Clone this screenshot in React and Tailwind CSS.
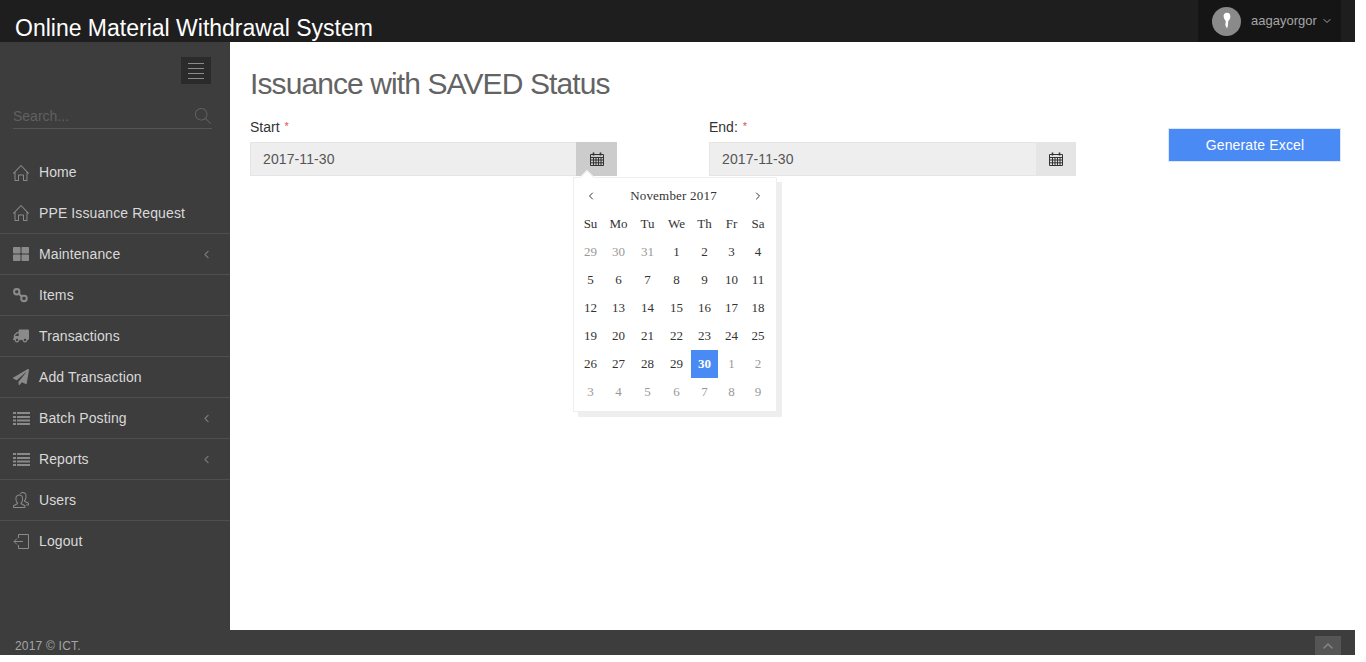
import { ChevronDown, ChevronLeft, ChevronRight, ChevronUp } from "lucide-react"
import { FaThLarge, FaTruck, FaPaperPlane } from "react-icons/fa"
import { SlHome, SlMagnifier, SlPeople } from "react-icons/sl"

function LinkIcon() {
  return (
    <svg viewBox="0 0 16 16" className="w-[15px] h-[15px]" fill="none" stroke="currentColor" strokeWidth="2.2">
      <rect x="1.2" y="1.2" width="5.6" height="5.6" rx="2.6" />
      <rect x="8.800" y="8.200" width="5.8" height="5.8" rx="2.6" />
      <path d="M6 6l3.500 3" />
    </svg>
  )
}

function ListIcon() {
  return (
    <svg viewBox="0 0 17 14" className="w-[17px] h-[14px]" fill="currentColor">
      <path d="M0 1h3v2H0zM4 1h13v2H4zM0 5h3v2H0zM4 5h13v2H4zM0 8.500h3v2H0zM4 8.500h13v2H4zM0 12h3v2H0zM4 12h13v2H4z" />
    </svg>
  )
}

function LogoutIcon() {
  return (
    <svg viewBox="0 0 17 17" className="w-[17px] h-[17px]" fill="none" stroke="currentColor" strokeWidth="1">
      <path d="M5.500 5V1.500h10v14h-10V12" />
      <path d="M10 8.500H1M4 5.500l-3 3 3 3" />
    </svg>
  )
}

function CalendarIcon() {
  return (
    <svg viewBox="0 0 14 14" className="w-[14px] h-[14px]" fill="none" stroke="#333" strokeWidth="1">
      <path d="M.5 2.500h13v11H.5z" />
      <path d="M.5 5.500h13M.5 8h13M.5 10.800h13M3.500 5.500v8M6 5.500v8M8.500 5.500v8M11 5.500v8" />
      <path d="M3.500 .5v3M10.500 .5v3" strokeWidth="1.6" />
    </svg>
  )
}

const menu = [
  { label: "Home", icon: <SlHome className="w-4 h-4" />, line: false },
  { label: "PPE Issuance Request", icon: <SlHome className="w-4 h-4" /> },
  { label: "Maintenance", icon: <FaThLarge className="w-4 h-4" />, sub: true },
  { label: "Items", icon: <LinkIcon /> },
  { label: "Transactions", icon: <FaTruck className="w-4 h-4 -scale-x-100" /> },
  { label: "Add Transaction", icon: <FaPaperPlane className="w-4 h-4" /> },
  { label: "Batch Posting", icon: <ListIcon />, sub: true },
  { label: "Reports", icon: <ListIcon />, sub: true },
  { label: "Users", icon: <SlPeople className="w-4 h-4" /> },
  { label: "Logout", icon: <LogoutIcon />, line: false },
]

const days = [
  [29, 30, 31, 1, 2, 3, 4],
  [5, 6, 7, 8, 9, 10, 11],
  [12, 13, 14, 15, 16, 17, 18],
  [19, 20, 21, 22, 23, 24, 25],
  [26, 27, 28, 29, 30, 1, 2],
  [3, 4, 5, 6, 7, 8, 9],
]

function isOld(row, day) {
  return (row === 0 && day > 20) || (row >= 4 && day < 10)
}

function DatePicker() {
  return (
    <div className="absolute left-[-4px] top-[60px] w-[204px] h-[235px] bg-white border border-[#eeeeee] shadow-[5px_5px_0_#eeeeee] pl-[3px] text-[#333333] font-['Liberation_Serif',serif]">
      <div className="absolute left-[8px] top-[-6px] w-[10px] h-[10px] rotate-45 bg-white border-l border-t border-[#eeeeee]"></div>
      <div className="h-[29px] mt-[3px] flex items-center justify-between pl-[8px] pr-[12px]">
        <ChevronLeft className="w-[12px] h-[12px]" />
        <span className="text-[13px] tracking-[0.2px] mr-[2px]">November 2017</span>
        <ChevronRight className="w-[12px] h-[12px]" />
      </div>
      <div className="grid grid-cols-[27px_29px_29px_29px_27px_27px_26px] auto-rows-[28px] items-center text-center">
        {["Su", "Mo", "Tu", "We", "Th", "Fr", "Sa"].map(d => (
          <div key={d} className="text-[13px]">{d}</div>
        ))}
        {days.map((week, r) =>
          week.map((d, i) => {
            const selected = r === 4 && d === 30
            return (
              <div
                key={r + "-" + i}
                className={`h-[28px] leading-[28px] text-[13px] ${selected ? "bg-[#4a8af4] text-white font-bold" : isOld(r, d) ? "text-[#999999]" : ""}`}
              >
                {d}
              </div>
            )
          })
        )}
      </div>
    </div>
  )
}

function DateField({ label, open }) {
  return (
    <div className="relative w-[367px]">
      <div className="h-[18px] leading-[18px] text-[14px] text-[#333333] mb-[7px]">
        {label} <span className="text-[#d9534f] text-[11px] ml-[1px] align-[2px]">*</span>
      </div>
      <div className="flex h-[34px] bg-[#eeeeee] border border-[#e5e5e5]">
        <div className="flex-1 pl-[12px] leading-[32px] text-[14px] text-[#555555] tracking-[0.1px]">2017-11-30</div>
        <div className={`-mr-px -my-px flex items-center justify-center ${open ? "w-[41px] bg-[#cccccc]" : "w-[40px] bg-[#e5e5e5]"}`}>
          <CalendarIcon />
        </div>
      </div>
      {open && (
        <div className="absolute left-[327px] top-0">
          <DatePicker />
        </div>
      )}
    </div>
  )
}

export default function App() {
  return (
    <div className="w-[1355px] h-[655px] flex flex-col bg-white font-['Liberation_Sans',Arial,sans-serif]">
      <header className="h-[42px] shrink-0 bg-[#1e1e1e] flex justify-between overflow-hidden">
        <div className="pl-[15px] pt-[13px] text-[23px] leading-[30px] text-white">Online Material Withdrawal System</div>
        <div className="w-[143px] mr-[14px] bg-[#151515] flex items-center pl-[14px] text-[13px] text-[#a5a5a5]">
          <div className="w-[29px] h-[29px] rounded-full bg-[#8a8a8a] flex items-center justify-center">
            <svg viewBox="0 0 12 20" className="w-[10px] h-[18px]" fill="#ffffff">
              <path d="M6 0C3 0 1.500 2 2 5c.3 2 1.500 4 2.500 5l-.5 5 2 4 1-3 .5-6c1.500-1.500 2.500-3 2.500-5.500C10 2 9 0 6 0z" />
            </svg>
          </div>
          <span className="ml-[10px]">aagayorgor</span>
          <ChevronDown className="w-[12px] h-[12px] ml-[4px]" />
        </div>
      </header>

      <div className="flex-1 flex min-h-0">
        <aside className="w-[230px] shrink-0 bg-[#3d3d3d]">
          <div className="flex justify-end pr-[19px] pt-[15px]">
            <div className="w-[30px] h-[27px] bg-[#2b2b2b] flex flex-col items-center justify-center gap-[4px]">
              <span className="block w-[16px] h-px bg-[#8a8a8a]"></span>
              <span className="block w-[16px] h-px bg-[#8a8a8a]"></span>
              <span className="block w-[16px] h-px bg-[#8a8a8a]"></span>
              <span className="block w-[16px] h-px bg-[#8a8a8a]"></span>
            </div>
          </div>
          <div className="mx-[13px] w-[199px] mt-[20px] h-[25px] border-b border-[#555555] flex items-center justify-between text-[#606060]">
            <span className="text-[14px]">Search...</span>
            <SlMagnifier className="w-4 h-4 mr-px" />
          </div>
          <nav className="mt-[23px]">
            {menu.map(item => (
              <div
                key={item.label}
                className={`h-[41px] flex items-center pl-[13px] pr-[17px] text-[14px] tracking-[0.1px] text-[#d9d9d9] ${item.line === false ? "" : "border-b border-[#4f4f4f]"}`}
              >
                <span className="w-[26px] text-[#8a8a8a] flex items-center">{item.icon}</span>
                <span className="flex-1">{item.label}</span>
                {item.sub && <ChevronLeft className="w-[13px] h-[13px] text-[#777777]" />}
              </div>
            ))}
          </nav>
        </aside>

        <main className="flex-1 pl-[20px] pr-[15px] relative">
          <h1 className="mt-[24px] h-[36px] leading-[36px] text-[30px] text-[#636363] tracking-[-0.9px]">Issuance with SAVED Status</h1>
          <div className="mt-[15px] flex items-start">
            <DateField label="Start" open />
            <div className="w-[92px]"></div>
            <DateField label="End:" />
            <button className="ml-[92px] mt-[11px] pt-px pl-px w-[173px] h-[34px] bg-[#4a8af4] border border-[#dbe7fb] text-white text-[14px] tracking-[0.15px]">Generate Excel</button>
          </div>
        </main>
      </div>

      <footer className="h-[25px] shrink-0 bg-[#3d3d3d] flex justify-between">
        <div className="pl-[15px] pt-[8px] text-[12px] leading-[17px] text-[#a5a5a5] tracking-[0.2px]">2017 © ICT.</div>
        <div className="mr-[14px] mt-[6px] w-[26px] h-[19px] bg-[#555555] flex items-center justify-center text-[#888888]">
          <ChevronUp className="w-[16px] h-[16px]" />
        </div>
      </footer>
    </div>
  )
}
